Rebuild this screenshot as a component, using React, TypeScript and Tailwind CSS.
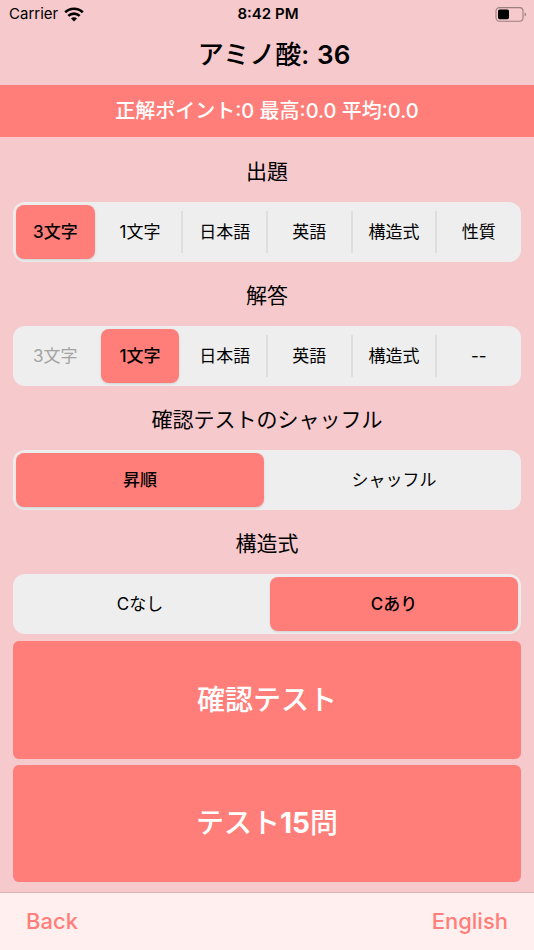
import { Fragment, useState } from "react";

type SegmentedProps = {
  name: string;
  title: string;
  options: string[];
  initial: number;
  disabled?: number[];
};

function Segmented({ name, title, options, initial, disabled = [] }: SegmentedProps) {
  const [selected, setSelected] = useState(initial);

  return (
    <section>
      <h2
        id={name}
        className="flex h-16 items-center justify-center pt-1 text-[21px] leading-7"
      >
        {title}
      </h2>
      <div
        role="radiogroup"
        aria-labelledby={name}
        className="flex h-15 items-center gap-[2px] rounded-xl bg-[#eeeeee] p-[3px] text-[17px] leading-6"
      >
        {options.map((option, i) => {
          const active = i === selected;
          const off = disabled.includes(i);
          // no divider next to the highlighted segment
          const divider = !active && i - 1 !== selected;
          return (
            <Fragment key={option}>
              {i > 0 && (
                <span
                  className={`h-[42px] w-[2px] shrink-0 ${divider ? "bg-[#dedede]" : ""}`}
                />
              )}
              <label
                className={`relative flex h-full flex-1 basis-0 items-center justify-center rounded-lg ${
                  active ? "bg-[#ff7e79] font-medium shadow" : ""
                } ${off ? "text-[#a3a3a3]" : "cursor-pointer"}`}
              >
                <input
                  type="radio"
                  name={name}
                  className="sr-only"
                  checked={active}
                  disabled={off}
                  onChange={() => setSelected(i)}
                />
                {option}
              </label>
            </Fragment>
          );
        })}
      </div>
    </section>
  );
}

function WifiIcon() {
  return (
    <svg viewBox="0 0 20 15" className="h-[15px] w-5" fill="none" stroke="black" strokeWidth="2.6">
      <path d="M1.2 5.3C6.2.6 13.8.6 18.8 5.3" />
      <path d="M4.3 8.9C7.5 5.9 12.5 5.9 15.7 8.9" />
      <path d="M10 14.6 7 11.6c1.7-1.7 4.3-1.7 6 0z" fill="black" stroke="none" />
    </svg>
  );
}

function BatteryIcon() {
  return (
    <svg viewBox="0 0 32 15" className="h-[15px] w-8">
      <rect x="1" y="0.6" width="27" height="13.6" rx="3.5" fill="none" stroke="#9b7e80" strokeWidth="1.1" />
      <rect x="3" y="2.6" width="11" height="9.6" rx="1.6" fill="black" />
      <path d="M29.6 5.2c2 .8 2 3.6 0 4.4z" fill="#9b7e80" />
    </svg>
  );
}

export default function App() {
  return (
    <div className="flex min-h-screen flex-col bg-[#f6c9cc] font-['Inter','Noto_Sans_CJK_JP',sans-serif] text-black">
      <div className="grid h-7 grid-cols-3 items-center pr-[7px] pl-[9px] text-[15px] leading-5">
        <div className="flex items-center gap-[6px]">
          <span>Carrier</span>
          <WifiIcon />
        </div>
        <span className="text-center font-semibold">8:42 PM</span>
        <div className="flex justify-end">
          <BatteryIcon />
        </div>
      </div>

      <header>
        <h1 className="flex h-[57px] items-center justify-center gap-2 pb-1 pl-[14px] text-[26px] leading-8 font-medium">
          <span>アミノ酸:</span>
          <span className="font-semibold">36</span>
        </h1>
        <p className="flex h-[52px] items-center justify-center bg-[#ff7e79] text-[20px] leading-7 font-medium text-white">
          正解ポイント:0 最高:0.0 平均:0.0
        </p>
      </header>

      <main className="flex flex-1 flex-col px-[13px] pt-px pb-[10px]">
        <Segmented
          name="question"
          title="出題"
          options={["3文字", "1文字", "日本語", "英語", "構造式", "性質"]}
          initial={0}
        />
        <Segmented
          name="answer"
          title="解答"
          options={["3文字", "1文字", "日本語", "英語", "構造式", "--"]}
          initial={1}
          disabled={[0]}
        />
        <Segmented
          name="order"
          title="確認テストのシャッフル"
          options={["昇順", "シャッフル"]}
          initial={0}
        />
        <Segmented
          name="structure"
          title="構造式"
          options={["Cなし", "Cあり"]}
          initial={1}
        />

        <div className="flex flex-1 flex-col gap-[6px] pt-[7px] text-[28px] leading-9 font-medium text-white">
          <button type="button" className="flex-1 rounded-md bg-[#ff7e79]">
            確認テスト
          </button>
          <button type="button" className="flex-1 rounded-md bg-[#ff7e79]">
            テスト<span className="font-bold">15</span>問
          </button>
        </div>
      </main>

      <footer className="flex h-[58px] items-center justify-between border-t border-[#d9b3b6] bg-[#fff0ef] px-[26px] pb-px text-[22px] leading-7 font-medium text-[#ff7e79]">
        <button type="button">Back</button>
        <button type="button">English</button>
      </footer>
    </div>
  );
}
